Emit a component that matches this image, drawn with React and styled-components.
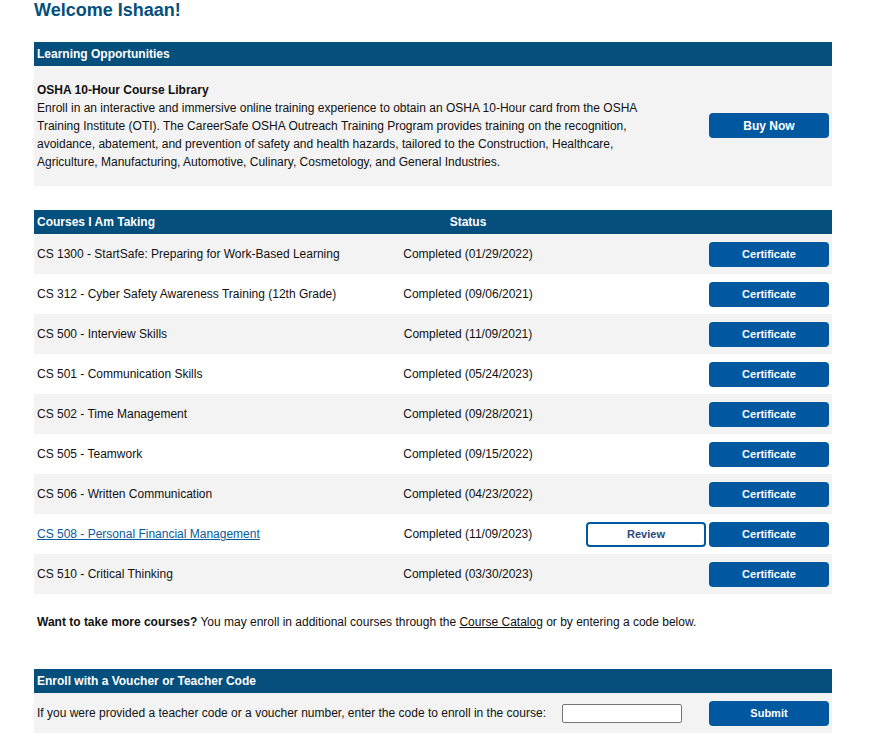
import React from 'react';
import styled, { createGlobalStyle } from 'styled-components';

const courses = [
  { name: 'CS 1300 - StartSafe: Preparing for Work-Based Learning', date: '01/29/2022' },
  { name: 'CS 312 - Cyber Safety Awareness Training (12th Grade)', date: '09/06/2021' },
  { name: 'CS 500 - Interview Skills', date: '11/09/2021' },
  { name: 'CS 501 - Communication Skills', date: '05/24/2023' },
  { name: 'CS 502 - Time Management', date: '09/28/2021' },
  { name: 'CS 505 - Teamwork', date: '09/15/2022' },
  { name: 'CS 506 - Written Communication', date: '04/23/2022' },
  { name: 'CS 508 - Personal Financial Management', date: '11/09/2023', link: true, review: true },
  { name: 'CS 510 - Critical Thinking', date: '03/30/2023' },
];

export default () => (
  <Page>
    <Global />
    <Title>Welcome Ishaan!</Title>

    <HeadBar>Learning Opportunities</HeadBar>
    <Offer>
      <OfferText>
        <OfferTitle>OSHA 10-Hour Course Library</OfferTitle>
        Enroll in an interactive and immersive online training experience to obtain an OSHA 10-Hour card from the OSHA
        Training Institute (OTI). The CareerSafe OSHA Outreach Training Program provides training on the recognition,
        avoidance, abatement, and prevention of safety and health hazards, tailored to the Construction, Healthcare,
        Agriculture, Manufacturing, Automotive, Culinary, Cosmetology, and General Industries.
      </OfferText>
      <BigButton>Buy Now</BigButton>
    </Offer>

    <TableHead>
      <span>Courses I Am Taking</span>
      <StatusHead>Status</StatusHead>
      <span />
    </TableHead>
    {courses.map((c, i) => (
      <Row key={c.name} striped={i % 2 === 0}>
        {c.link ? <CourseLink href="#">{c.name}</CourseLink> : <span>{c.name}</span>}
        <Status>Completed ({c.date})</Status>
        <Actions>
          {c.review && <OutlineButton>Review</OutlineButton>}
          <SmallButton>Certificate</SmallButton>
        </Actions>
      </Row>
    ))}

    <More>
      <b>Want to take more courses?</b> You may enroll in additional courses through the{' '}
      <PlainLink href="#">Course Catalog</PlainLink> or by entering a code below.
    </More>

    <HeadBar>Enroll with a Voucher or Teacher Code</HeadBar>
    <Enroll>
      <span>If you were provided a teacher code or a voucher number, enter the code to enroll in the course:</span>
      <CodeInput />
      <SmallButton>Submit</SmallButton>
    </Enroll>
  </Page>
);

const navy = '#054f7d';
const blue = '#0058a1';
const panel = '#f3f3f3';

const Global = createGlobalStyle`
  body {
    margin: 0;
    background: #fff;
    font-family: 'Liberation Sans', Arial, sans-serif;
    font-size: 12px;
    color: #111;
  }
`;

const Page = styled.div`
  width: 798px;
  margin-left: 34px;
  padding-top: 1px;
`;

const Title = styled.h1`
  margin: 0 0 22px;
  font-size: 18px;
  line-height: 19px;
  color: ${navy};
  font-weight: bold;
`;

const HeadBar = styled.div`
  background: ${navy};
  color: #fff;
  font-weight: bold;
  height: 24px;
  line-height: 24px;
  padding-left: 3px;
`;

const Offer = styled.div`
  background: ${panel};
  display: flex;
  align-items: flex-start;
  justify-content: space-between;
  padding: 15px 3px 15px 3px;
  margin-bottom: 24px;
`;

const OfferText = styled.div`
  width: 610px;
  line-height: 18px;
`;

const OfferTitle = styled.div`
  font-weight: bold;
`;

const button = `
  width: 120px;
  height: 25px;
  border-radius: 4px;
  font-family: 'Liberation Sans', Arial, sans-serif;
  font-weight: bold;
  cursor: pointer;
`;

const BigButton = styled.button`
  ${button}
  margin-top: 32px;
  background: ${blue};
  border: none;
  color: #fff;
  font-size: 12px;
`;

const SmallButton = styled.button`
  ${button}
  background: ${blue};
  border: none;
  color: #fff;
  font-size: 11px;
`;

const OutlineButton = styled.button`
  ${button}
  background: #fff;
  border: 2px solid ${blue};
  color: #2b4a7a;
  font-size: 11px;
`;

const grid = `
  display: grid;
  grid-template-columns: 363px 136px 1fr;
  align-items: center;
  padding-left: 3px;
`;

const TableHead = styled.div`
  ${grid}
  background: ${navy};
  color: #fff;
  font-weight: bold;
  height: 24px;
`;

const StatusHead = styled.span`
  text-align: center;
`;

const Row = styled.div`
  ${grid}
  height: 40px;
  background: ${(p) => (p.striped ? panel : '#fff')};
`;

const Status = styled.span`
  text-align: center;
`;

const Actions = styled.div`
  display: flex;
  justify-content: flex-end;
  gap: 3px;
  padding-right: 3px;
`;

const CourseLink = styled.a`
  color: #0b5a9c;
  text-decoration: underline;
`;

const PlainLink = styled.a`
  color: #111;
  text-decoration: underline;
`;

const More = styled.p`
  margin: 21px 0 39px;
  padding-left: 3px;
  line-height: 15px;
`;

const Enroll = styled.div`
  background: ${panel};
  height: 40px;
  display: flex;
  align-items: center;
  padding: 0 3px;
`;

const CodeInput = styled.input`
  width: 114px;
  height: 15px;
  margin-left: 16px;
  margin-right: 27px;
  border: 1px solid #767676;
  border-radius: 2px;
  padding: 1px 2px;
`;
